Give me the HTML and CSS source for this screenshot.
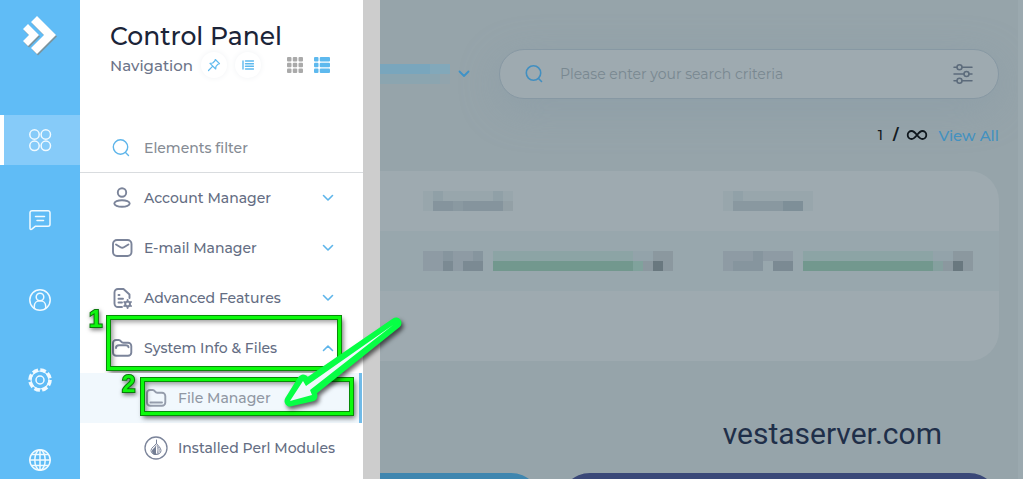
FILE: index.html
```
<!DOCTYPE html>
<html lang="en">
<head>
<meta charset="utf-8">
<title>Control Panel</title>
<link rel="stylesheet" href="styles.css">
</head>
<body>
<nav class="rail" aria-label="Sections">
  <a class="logo" href="#" aria-label="Home"><svg width="40" height="44" viewBox="0 0 40 44"><g fill="#8a7f70" opacity=".65" transform="translate(1 1.500)"><path d="M17 2 36 21 17 40 11 34 24 21 11 8z"/><path d="M8 10 19 21 8 32 3 27 9 21 3 15z"/></g><path fill="#fff" d="M17 2 36 21 17 40 11 34 24 21 11 8z"/><path fill="#fff" d="M8 10 19 21 8 32 3 27 9 21 3 15z"/></svg></a>
  <a class="rail-item active" href="#" aria-label="Dashboard"><svg width="24" height="24" viewBox="0 0 24 24"><circle cx="6.500" cy="6.500" r="4.700"/><circle cx="17.800" cy="6.500" r="4.700"/><circle cx="6.500" cy="17.800" r="4.700"/><circle cx="17.800" cy="17.800" r="4.700"/></svg></a>
  <a class="rail-item" href="#" aria-label="Messages"><svg width="24" height="24" viewBox="0 0 24 24"><path d="M4 2.700h16a2 2 0 0 1 2 2v11.500a2 2 0 0 1-2 2H7.500L3.800 21.200c-.8.500-1.800.1-1.800-.8V4.700a2 2 0 0 1 2-2zM7.500 8.500h9M9 12.500h6.500"/></svg></a>
  <a class="rail-item" href="#" aria-label="Users"><svg width="24" height="24" viewBox="0 0 24 24"><circle cx="12" cy="12" r="10.200"/><circle cx="12" cy="9" r="3.800"/><path d="M6.300 20v-2c0-3 2.500-5.200 5.700-5.200s5.700 2.200 5.700 5.200v2"/></svg></a>
  <a class="rail-item" href="#" aria-label="Settings"><svg width="26" height="26" viewBox="0 0 26 26"><circle cx="13" cy="13" r="4"/><circle cx="13" cy="13" r="9" stroke-width="1.200"/><circle class="teeth" cx="13" cy="13" r="10" stroke-width="3.600" stroke-dasharray="5.600 2.254"/></svg></a>
  <a class="rail-item" href="#" aria-label="Language"><svg width="24" height="24" viewBox="0 0 24 24"><circle cx="12" cy="12" r="10.200"/><ellipse cx="12" cy="12" rx="5.200" ry="10.200"/><path d="M12 2v20M2 12h20M3.700 6.500h16.600M3.700 17.500h16.600"/></svg></a>
</nav>

<aside class="panel">
  <header class="panel-head">
    <h1>Control Panel</h1>
    <div class="nav-row">
      <span>Navigation</span>
      <button class="round" aria-label="Pin"><svg width="14" height="14" viewBox="0 0 14 14"><path d="M8.300 1.500 12.500 5.700 11 6.200 9 8.300 8.700 11 3 5.300 5.700 5 7.800 3zM5.800 8.200 1.500 12.500"/></svg></button>
      <button class="round" aria-label="List"><svg width="12" height="10" viewBox="0 0 12 10"><path d="M3.500 1h8M3.500 3.700h8M3.500 6.300h8M3.500 9h8M1 1v8" stroke-width="1.400"/></svg></button>
      <button class="view grid-view" aria-label="Grid view"><svg width="16" height="16" viewBox="0 0 16 16"><g fill="#aaa"><rect width="4.500" height="4.500" rx="1"/><rect x="5.750" width="4.500" height="4.500" rx="1"/><rect x="11.500" width="4.500" height="4.500" rx="1"/><rect y="5.750" width="4.500" height="4.500" rx="1"/><rect x="5.750" y="5.750" width="4.500" height="4.500" rx="1"/><rect x="11.500" y="5.750" width="4.500" height="4.500" rx="1"/><rect y="11.500" width="4.500" height="4.500" rx="1"/><rect x="5.750" y="11.500" width="4.500" height="4.500" rx="1"/><rect x="11.500" y="11.500" width="4.500" height="4.500" rx="1"/></g></svg></button>
      <button class="view" aria-label="List view"><svg width="16" height="16" viewBox="0 0 16 16"><g fill="#5eb9ee"><rect width="4.500" height="4.500" rx="1"/><rect x="5.750" width="10.250" height="4.500" rx="1"/><rect y="5.750" width="4.500" height="4.500" rx="1"/><rect x="5.750" y="5.750" width="10.250" height="4.500" rx="1"/><rect y="11.500" width="4.500" height="4.500" rx="1"/><rect x="5.750" y="11.500" width="10.250" height="4.500" rx="1"/></g></svg></button>
    </div>
  </header>
  <label class="filter">
    <svg width="20" height="20" viewBox="0 0 20 20"><circle cx="9.500" cy="9" r="7.200"/><path d="M14.500 14.500l3 3"/></svg>
    <input type="text" placeholder="Elements filter" aria-label="Elements filter">
  </label>
  <ul class="menu">
    <li><a href="#"><svg class="ico" width="24" height="24" viewBox="0 0 24 24"><circle cx="12" cy="6.500" r="4.200"/><ellipse cx="12" cy="17.500" rx="7.700" ry="3.300"/></svg><span>Account Manager</span><svg class="chev" width="12" height="8" viewBox="0 0 12 8"><path d="M1.500 1.500 6 6l4.500-4.500"/></svg></a></li>
    <li><a href="#"><svg class="ico" width="24" height="24" viewBox="0 0 24 24"><rect x="3" y="4" width="18.500" height="16" rx="4"/><path d="M6 8.500l4.500 2.700q1.700 1 3.400 0l4.500-2.700"/></svg><span>E-mail Manager</span><svg class="chev" width="12" height="8" viewBox="0 0 12 8"><path d="M1.500 1.500 6 6l4.500-4.500"/></svg></a></li>
    <li><a href="#"><svg class="ico" width="24" height="24" viewBox="0 0 24 24"><path d="M19.500 12V8.500L13.500 3H8a3.500 3.500 0 0 0-3.500 3.500v11A3.500 3.500 0 0 0 8 21h4M8.500 9h1M8.500 12.800h4.500M8.500 16.500h3.500"/><circle cx="17.600" cy="18" r="2.400"/><path d="M17.600 14v1.500M17.600 20.500V22M14.200 16l1.200.7M19.800 19.300l1.200.7M14.200 20l1.200-.7M19.800 16.700 21 16"/></svg><span>Advanced Features</span><svg class="chev" width="12" height="8" viewBox="0 0 12 8"><path d="M1.500 1.500 6 6l4.500-4.500"/></svg></a></li>
    <li class="group"><a href="#"><svg class="ico" width="24" height="24" viewBox="0 0 24 24"><path d="M3 16.500V7a3 3 0 0 1 3-3h2.700c2.500 0 2 2.700 4.500 2.700H18A3.300 3.300 0 0 1 21.300 10v6.500a3.300 3.300 0 0 1-3.300 3.300H6.300A3.300 3.300 0 0 1 3 16.500zM6 12q0-2.700 3-2.700h6.500q3 0 3 2"/></svg><span>System Info &amp; Files</span><svg class="chev" width="12" height="8" viewBox="0 0 12 8"><path d="M1.500 6.500 6 2l4.500 4.500"/></svg></a><b class="step">1</b>
      <svg class="arrow" width="130" height="100" viewBox="0 0 130 100"><path d="M12 88 25 67 29 71 118 10 33 78 34 83z" fill="#07ff45" stroke="#07ff45" stroke-width="11" stroke-linejoin="round"/><path d="M12 88 25 68 28 73 115 12 32 77 34 82z" fill="#eef8fb"/></svg></li>
    <li class="sub current"><a href="#"><svg class="ico" width="24" height="24" viewBox="0 0 24 24"><path d="M3 16.500V7a3 3 0 0 1 3-3h2.700c2.500 0 2 2.700 4.500 2.700H18A3.300 3.300 0 0 1 21.300 10v6.500a3.300 3.300 0 0 1-3.300 3.300H6.300A3.300 3.300 0 0 1 3 16.500zM6.500 16.500h11.500"/></svg><span>File Manager</span></a><b class="step">2</b></li>
    <li class="sub"><a href="#"><svg class="ico" width="24" height="24" viewBox="0 0 24 24"><circle cx="12" cy="12" r="11" stroke-width="1.300"/><path stroke-width="1" d="M12.500 4v3.500M12.500 7.500C11 10 7 11.500 7 14.500c0 2.500 2 4 5 4s5-1.500 5-4c0-3-3-4.500-4.500-7z"/><path d="M12 9v10c-3 0-4-2-4-4s3-3 4-6z" fill="#737d93" stroke="none"/><path stroke-width=".8" d="M13 9.500c1.300 3 1.300 6 0 8.500M14.500 11c1.200 2.500 1 4.500 0 6.500"/></svg><span>Installed Perl Modules</span></a></li>
  </ul>
</aside>
<div class="track"></div>

<main class="main">
  <div class="topbar">
    <button class="account" aria-label="Account">
      <svg width="70" height="20" viewBox="0 0 70 20" shape-rendering="crispEdges"><path fill="#79a6bd" d="M0 0h50v10H0z"/><path fill="#82a8ba" d="M50 0h20v10H50z"/><path fill="#8ba5b0" d="M0 10h60v10H0z"/><path fill="#91a4ad" d="M60 10h10v10H60z"/></svg>
      <svg class="down" width="12" height="8" viewBox="0 0 12 8"><path d="M1.500 1.500 6 6l4.500-4.500"/></svg>
    </button>
    <label class="search">
      <svg class="lens" width="20" height="20" viewBox="0 0 20 20"><circle cx="9.500" cy="9" r="7.200"/><path d="M14.500 14.500l3 3"/></svg>
      <input type="text" placeholder="Please enter your search criteria" aria-label="Search">
      <svg class="tune" width="20" height="20" viewBox="0 0 20 20"><path d="M1 3.300h3M9 3.300h10M1 10h10M16 10h3M1 16.700h3M9 16.700h10"/><circle cx="6.500" cy="3.300" r="2.500"/><circle cx="13.500" cy="10" r="2.500"/><circle cx="6.500" cy="16.700" r="2.500"/></svg>
    </label>
  </div>
  <div class="count">
    <span>1</span><b>/</b>
    <svg width="22" height="12" viewBox="0 0 22 12" role="img" aria-label="Unlimited"><path d="M11 6C8.500 2.800 7.500 2 5.700 2a4 4 0 0 0 0 8C7.500 10 8.500 9.200 11 6s3.500-4 5.300-4a4 4 0 0 1 0 8C14.500 10 13.500 9.200 11 6z"/></svg>
    <a href="#">View All</a>
  </div>
  <div class="card">
    <table>
      <thead><tr>
        <th><svg width="90" height="20" viewBox="0 0 90 20" shape-rendering="crispEdges"><path fill="#98a6ac" d="M0 0h90v20H0z"/><path fill="#90a0a7" d="M10 0h10v10H10zM70 0h10v10H70z"/><path fill="#85949d" d="M10 10h20v10H10zM40 10h40v10H40z"/><path fill="#8a99a1" d="M30 10h10v10H30z"/><path fill="#93a0a6" d="M80 10h10v10H80z"/></svg></th>
        <th><svg width="90" height="20" viewBox="0 0 90 20" shape-rendering="crispEdges"><path fill="#98a6ac" d="M0 0h90v20H0z"/><path fill="#91a1a8" d="M10 0h10v10H10z"/><path fill="#8998a0" d="M10 10h50v10H10z"/><path fill="#7e8f98" d="M60 10h20v10H60z"/></svg></th>
      </tr></thead>
      <tbody><tr>
        <td><svg width="250" height="20" viewBox="0 0 250 20" shape-rendering="crispEdges"><path fill="#8e9ba4" d="M0 0h60v20H0z"/><path fill="#86959e" d="M20 0h10v10H20zM50 0h10v10H50z"/><path fill="#7b8a93" d="M20 10h10v10H20zM40 10h20v10H40z"/><path fill="#8ca4a5" d="M70 0h140v10H70z"/><path fill="#72988e" d="M70 10h140v10H70z"/><path fill="#80a29c" d="M210 10h10v10H210z"/><path fill="#93a3aa" d="M210 0h20v10H210z"/><path fill="#8b989f" d="M220 10h30v10H220zM230 0h20v10H230z"/><path fill="#69787f" d="M230 10h10v10H230z"/></svg></td>
        <td><svg width="250" height="20" viewBox="0 0 250 20" shape-rendering="crispEdges"><path fill="#8e9ba4" d="M0 0h70v20H0z"/><path fill="#86959e" d="M30 0h10v10H30zM10 10h30v10H10z"/><path fill="#98a7ad" d="M40 10h10v10H40z"/><path fill="#7b8a93" d="M50 10h20v10H50z"/><path fill="#8ca4a5" d="M80 0h130v10H80z"/><path fill="#72988e" d="M80 10h130v10H80z"/><path fill="#85a09f" d="M210 10h10v10H210z"/><path fill="#93a3aa" d="M210 0h20v10H210z"/><path fill="#8b989f" d="M220 10h30v10H220zM230 0h20v10H230z"/><path fill="#69787f" d="M230 10h10v10H230z"/></svg></td>
      </tr></tbody>
    </table>
  </div>
  <p class="brand">vestaserver.com</p>
  <div class="tiles"><div class="tile blue"></div><div class="tile navy"></div></div>
</main>
</body>
</html>
```
FILE: styles.css
```
* { box-sizing: border-box; }
body { margin: 0; height: 100vh; display: flex; overflow: hidden; background: #96a4aa; font-family: Montserrat, Inter, "Open Sans", sans-serif; font-size: 14px; font-weight: 500; color: #646d83; }
a { color: inherit; text-decoration: none; }
button { border: 0; padding: 0; background: none; }
input { border: 0; padding: 0; background: none; outline: 0; font: inherit; min-width: 0; flex: 1; }
svg { display: block; flex: none; fill: none; stroke-linecap: round; stroke-linejoin: round; }

.rail { width: 80px; flex: none; background: #60bcf6; display: flex; flex-direction: column; gap: 30px; }
.logo { height: 85px; flex: none; padding: 14px 0 0 20px; }
.rail-item { height: 50px; flex: none; display: flex; align-items: center; justify-content: center; border-left: 4px solid transparent; border-right: 4px solid transparent; }
.rail-item.active { background: #86cbf9; border-left-color: #fff; border-right-color: #86cbf9; }
.rail-item svg { stroke: #f0faff; stroke-width: 1.5; }
.teeth { stroke-linecap: butt; }

.panel { width: 283px; flex: none; background: #fff; }
.panel-head { padding: 20px 30px 0; }
h1 { margin: 0; font-size: 25px; line-height: 32px; font-weight: 500; color: #1b2438; }
.nav-row { display: flex; align-items: center; height: 26px; font-size: 15px; color: #6c7489; }
.round { width: 26px; height: 26px; margin-left: 8px; border-radius: 50%; display: flex; align-items: center; justify-content: center; box-shadow: 0 0 6px #f0f2f4; }
.round svg { stroke: #5eb9ee; stroke-width: 1.2; }
.view { margin-left: 11px; }
.grid-view { margin-left: auto; }
.view:last-child { margin-right: 3px; }
.filter { display: flex; align-items: center; gap: 13px; height: 49px; margin-top: 46px; padding: 0 30px 0 31px; border-bottom: 1px solid #d9dcdf; }
.filter svg { stroke: #5eb5ea; stroke-width: 1.4; }
.filter input::placeholder { color: #858b94; opacity: 1; }
.menu { margin: 0; padding: 0; list-style: none; }
.menu li { position: relative; }
.menu a { display: flex; align-items: center; gap: 10px; height: 50px; padding: 0 29px 0 30px; }
.menu span { flex: 1; white-space: nowrap; }
.ico { stroke: #7b849a; stroke-width: 1.9; }
.chev { stroke: #5eb5ea; stroke-width: 1.6; }
.menu .sub a { padding: 0 20px 0 64px; }
.current { background: #f1f8fd; border-right: 3px solid #72bce9; margin-right: 1px; color: #9097a3; }
.current .ico { stroke: #959dac; }

/* Walkthrough markers over the menu */
.group::after, .current::after { content: ""; position: absolute; border: 3px solid #0cfb0c; box-shadow: 0 0 0 1px #078c08, inset 0 0 0 1px #078c08, 2px 3px 5px #0009, inset 3px 3px 5px #0006; pointer-events: none; }
.group::after { inset: -7px 22px 3px 27px; }
.current::after { inset: 5px 6px 8px 61px; }
.step { position: absolute; z-index: 2; font: bold 24px/24px "Liberation Sans", sans-serif; color: #10f510; -webkit-text-stroke: 2px #087a0a; paint-order: stroke fill; filter: drop-shadow(1px 2px 2px #0008); }
.group .step { left: 9px; top: -16px; }
.current .step { left: 42px; top: -1px; }
.arrow { position: absolute; z-index: 3; left: 198px; top: -10px; filter: drop-shadow(2px 3px 2px #0009); }

.track { width: 17px; flex: none; background: #cdcdcd; }
.main { flex: 1; min-width: 0; height: 100vh; overflow: hidden; padding: 49px 19px 0 0; border-right: 5px solid #9ba9af; display: flex; flex-direction: column; }
.topbar { flex: none; display: flex; justify-content: space-between; align-items: center; gap: 28px; }
.account { display: flex; align-items: center; gap: 8px; }
.down { stroke: #3f93c8; stroke-width: 1.8; }
.search { width: 500px; height: 50px; display: flex; align-items: center; border: 1px solid #8798a3; border-radius: 25px; padding: 0 25px 0 24px; background: #9eaab0; box-shadow: 0 10px 40px #8396a466; }
.lens { stroke: #428fc0; stroke-width: 1.6; }
.search input { margin-left: 16px; }
.search input::placeholder { color: #798890; opacity: 1; font-weight: 400; }
.tune { stroke: #5c6b7b; stroke-width: 1.5; }
.count { height: 72px; flex: none; display: flex; justify-content: flex-end; align-items: center; color: #141b22; }
.count b { margin: 0 8px 0 10px; }
.count svg { stroke: #0f171d; stroke-width: 1.8; }
.count a { margin-left: 10px; font-size: 15px; color: #4391c0; }
.card { flex: none; background: #9eaab0; border-radius: 0 30px 30px 0; padding-bottom: 70px; }
table { width: 100%; border-collapse: collapse; table-layout: fixed; }
th, td { height: 60px; padding: 0; }
th:first-child, td:first-child { width: 343px; padding-left: 43px; }
tbody tr { background: #98a7ad; }
.brand { margin: 54px 57px 0 0; text-align: right; font: 400 30px/38px "Liberation Sans Narrow", Roboto, sans-serif; color: #1f2f49; }
.tiles { display: grid; grid-template-columns: 161fr 439fr; gap: 19px; margin-top: 20px; flex: none; }
.tile { height: 100px; border-radius: 30px; }
.blue { background: #3f86af; border-radius: 0 30px 30px 0; }
.navy { background: #3a4878; }
```
